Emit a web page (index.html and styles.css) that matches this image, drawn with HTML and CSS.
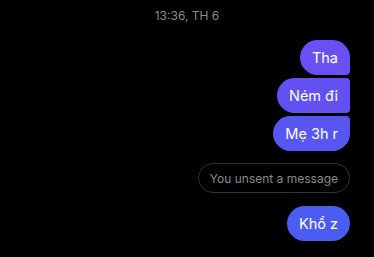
FILE: index.html
```html
<!DOCTYPE html>
<html>
<head>
<meta charset="utf-8">
<link rel="stylesheet" href="styles.css">
</head>
<body>
<div class="chat">
  <div class="stamp">13:36, TH 6</div>
  <div class="group">
    <div class="bubble first">Tha</div>
    <div class="bubble mid">Ném đi</div>
    <div class="bubble last">Mẹ 3h r</div>
  </div>
  <div class="unsent">You unsent a message</div>
  <div class="group">
    <div class="bubble single">Khổ z</div>
  </div>
</div>
</body>
</html>
```
FILE: styles.css
```css
html, body {
  margin: 0;
  padding: 0;
  background: #000;
}
.chat {
  width: 374px;
  height: 257px;
  display: flex;
  flex-direction: column;
  align-items: flex-end;
  padding: 9px 24px 0 0;
  box-sizing: border-box;
  font-family: Inter, "Noto Sans", sans-serif;
}
.stamp {
  align-self: stretch;
  padding-left: 24px;
  text-align: center;
  color: #8a8a8a;
  font-size: 12px;
  line-height: 13px;
}
.group {
  display: flex;
  flex-direction: column;
  align-items: flex-end;
  gap: 3px;
}
.stamp + .group { margin-top: 18px; }
.bubble {
  height: 35px;
  box-sizing: border-box;
  padding: 0 12px;
  display: flex;
  align-items: center;
  color: #fff;
  font-size: 14.5px;
  border-radius: 17.5px;
}
.first { background: #6a4ff4; border-bottom-right-radius: 4px; }
.mid { background: #6150f2; border-top-right-radius: 4px; border-bottom-right-radius: 4px; }
.last { background: #5856f1; border-top-right-radius: 4px; }
.single { background: #4b5cf0; }
.unsent {
  margin-top: 12px;
  margin-bottom: 13px;
  height: 30px;
  box-sizing: border-box;
  padding: 0 11px;
  border: 1px solid #333;
  border-radius: 15px;
  display: flex;
  align-items: center;
  color: #8a8a8a;
  font-size: 12px;
}
```
